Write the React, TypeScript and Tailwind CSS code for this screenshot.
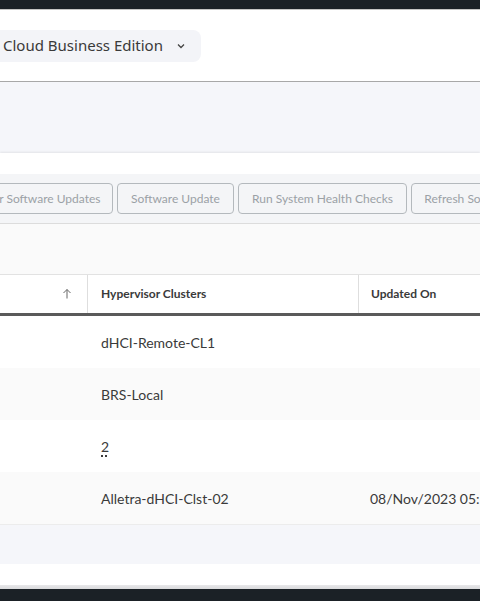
import React from "react";

const rows = [
  { cluster: "dHCI-Remote-CL1", updated: "", bg: "bg-white" },
  { cluster: "BRS-Local", updated: "", bg: "bg-[#fafafa]" },
  { cluster: "2", updated: "", bg: "bg-white", dotted: true },
  { cluster: "Alletra-dHCI-Clst-02", updated: "08/Nov/2023 05:12", bg: "bg-[#fafafa]" },
];

export default function App() {
  return (
    <div className="w-[480px] h-[601px] overflow-hidden flex flex-col bg-[#f5f6fa]" style={{ fontFamily: "Lato, 'Noto Sans', sans-serif" }}>
      <div className="h-[9px] bg-[#1b2126] shrink-0" />
      <div className="h-[73px] shrink-0 bg-white border-t border-[#c4c4c4] border-b border-b-[#a8a8a8] flex items-center">
        <div className="ml-[-21px] h-[32px] pl-[24px] pr-[14px] rounded-lg bg-[#f3f4f8] flex items-center gap-[12px] text-[15px] text-[#3a3a3a]" style={{ fontFamily: "'Noto Sans', sans-serif" }}>
          <span>Cloud Business Edition</span>
          <svg width="12" height="12" viewBox="0 0 12 12" fill="none" stroke="#444" strokeWidth="1.3"><path d="M3 4.5l3 3 3-3" /></svg>
        </div>
      </div>
      <div className="h-[71px] shrink-0" />
      <div className="flex-1 flex flex-col bg-white shadow-[0_-1px_2px_rgba(0,0,0,0.08)]">
        <div className="h-[21px] shrink-0 bg-white" />
        <div className="h-[50px] shrink-0 bg-[#f4f5f7] border-b border-[#dcdcdc] flex items-center gap-[4px] ml-[-60px] whitespace-nowrap overflow-hidden">
          {[
            ["Check for Software Updates", "w-[173px]"],
            ["Software Update", "w-[117px]"],
            ["Run System Health Checks", "w-[169px]"],
            ["Refresh Software Catalog", "w-[160px]"],
          ].map(([t, w]) => (
            <div key={t} className={`${w} shrink-0 h-[31px] rounded-[4px] border border-[#b4b9bd] flex items-center justify-center text-[12px] text-[#9ba1a6]`}>
              {t}
            </div>
          ))}
        </div>
        <div className="h-[50px] shrink-0 bg-[#fafafa]" />
        <div className="h-[42px] shrink-0 bg-white border-t border-[#e2e2e2] border-b-[3px] border-b-[#5a5a5a] flex text-[12px] font-bold text-[#3a3a3a]">
          <div className="w-[88px] shrink-0 border-r border-[#dedede] flex items-center justify-end pr-[14px]">
            <svg width="12" height="12" viewBox="0 0 12 12" fill="none" stroke="#666" strokeWidth="1"><path d="M6 10.5V1.5M2.5 5l3.5-3.5L9.5 5" /></svg>
          </div>
          <div className="w-[271px] shrink-0 border-r border-[#dedede] flex items-center pl-[13px]">Hypervisor Clusters</div>
          <div className="flex-1 flex items-center pl-[12px] whitespace-nowrap">Updated On</div>
        </div>
        {rows.map((r) => (
          <div key={r.cluster} className={`h-[52px] shrink-0 ${r.bg} flex items-center text-[14px] text-[#3a3a3a]`}>
            <div className="w-[88px] shrink-0" />
            <div className="w-[271px] shrink-0 pl-[13px]">
              {r.dotted ? <span className="underline decoration-dotted decoration-[1.5px] underline-offset-[4px]">{r.cluster}</span> : r.cluster}
            </div>
            <div className="flex-1 pl-[11px] whitespace-nowrap">{r.updated}</div>
          </div>
        ))}
        <div className="h-[40px] shrink-0 bg-[#f5f6fa] border-t border-[#ececec]" />
        <div className="h-[21px] shrink-0 bg-white" />
        <div className="h-[4px] shrink-0 bg-gradient-to-b from-[#e8e8ea] to-[#d9dadc]" />
        <div className="flex-1 bg-[#1b2126]" />
      </div>
    </div>
  );
}
